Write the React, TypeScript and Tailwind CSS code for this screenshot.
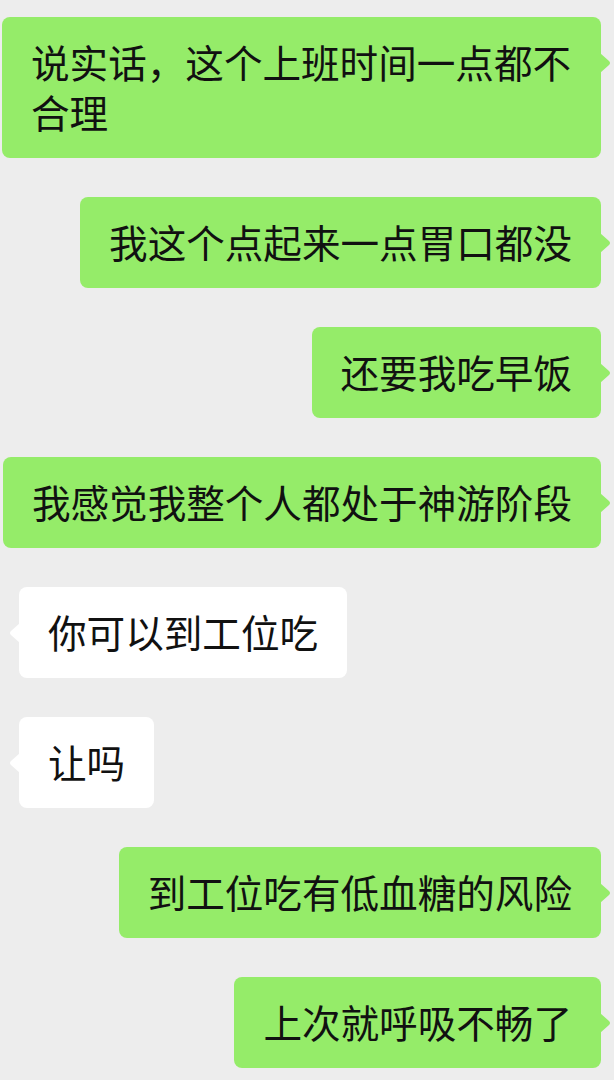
import React from "react";

type Msg = { text: string; me: boolean };

const msgs: Msg[] = [
  { text: "说实话，这个上班时间一点都不合理", me: true },
  { text: "我这个点起来一点胃口都没", me: true },
  { text: "还要我吃早饭", me: true },
  { text: "我感觉我整个人都处于神游阶段", me: true },
  { text: "你可以到工位吃", me: false },
  { text: "让吗", me: false },
  { text: "到工位吃有低血糖的风险", me: true },
  { text: "上次就呼吸不畅了", me: true },
];

function Tail({ me }: { me: boolean }) {
  return (
    <svg
      width="11"
      height="20"
      viewBox="0 0 11 20"
      className={
        me
          ? "absolute top-[36px] right-[-10px]"
          : "absolute top-[36px] left-[-10px] -scale-x-100"
      }
    >
      <path
        d="M0 0 L9 8 Q11 10 9 12 L0 20 Z"
        fill={me ? "#95ec69" : "#ffffff"}
      />
    </svg>
  );
}

export default function App() {
  return (
    <div
      className="min-h-[1080px] w-[614px] bg-[#ededed] flex flex-col gap-[39px] pt-[17px] pb-[20px]"
      style={{ fontFamily: '"Noto Sans CJK SC", "Noto Sans", sans-serif' }}
    >
      {msgs.map((m, i) => (
        <div
          key={i}
          className={
            m.me
              ? "flex justify-end pr-[13px]"
              : "flex justify-start pl-[19px]"
          }
        >
          <div
            className={
              (m.me ? "bg-[#95ec69] " : "bg-white ") +
              "relative max-w-[599px] rounded-[8px] px-[29px] pt-[18.5px] pb-[22.5px] text-[38.6px] leading-[50px] text-[#111111]"
            }
          >
            {m.text}
            <Tail me={m.me} />
          </div>
        </div>
      ))}
    </div>
  );
}
